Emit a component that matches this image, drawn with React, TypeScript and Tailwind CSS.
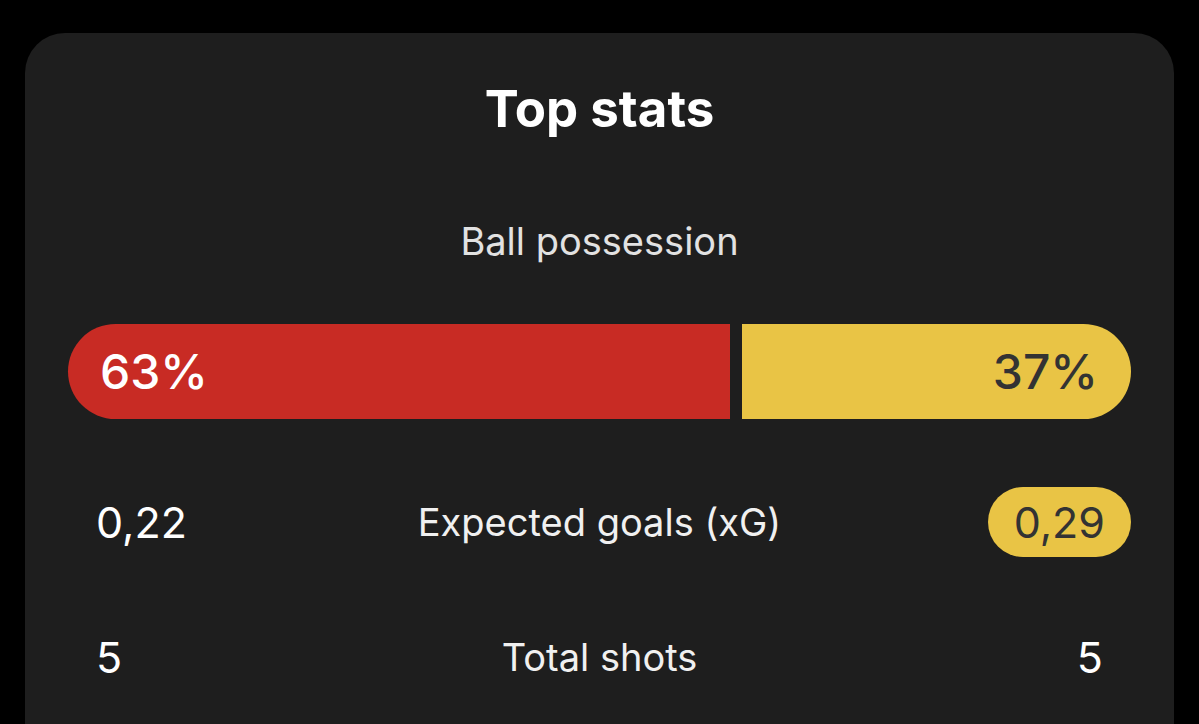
import React from "react";

interface Stat {
  label: string;
  home: string;
  away: string;
  winner: "home" | "away" | null;
}

const stats: Stat[] = [
  { label: "Expected goals (xG)", home: "0,22", away: "0,29", winner: "away" },
  { label: "Total shots", home: "5", away: "5", winner: null },
];

const possession = { home: 63, away: 37 };

const StatRow: React.FC<{ stat: Stat }> = ({ stat }) => {
  const pill = (value: string, highlighted: boolean) => (
    <span
      className={`h-[70px] flex items-center rounded-full text-[43px] leading-none ${
        highlighted ? "px-[26px] bg-[#e9c445] text-[#333333]" : "px-[28px] text-white"
      }`}
    >
      {value}
    </span>
  );

  return (
    <div className="flex items-center justify-between h-[70px]">
      <div className="w-[200px] flex justify-start">{pill(stat.home, stat.winner === "home")}</div>
      <span className="text-[38px] leading-none text-[#f0f0f0]">{stat.label}</span>
      <div className="w-[200px] flex justify-end">{pill(stat.away, stat.winner === "away")}</div>
    </div>
  );
};

export default function App() {
  return (
    <div
      className="h-[724px] overflow-hidden bg-black px-[25px] pt-[33px]"
      style={{ fontFamily: "Inter, 'Noto Sans', sans-serif" }}
    >
      <div className="h-[760px] rounded-[40px] bg-[#1e1e1e] px-[43px] pt-[50px]">
        <h2 className="text-center text-[51px] font-bold leading-none text-white">Top stats</h2>

        <p className="mt-[88px] text-center text-[38px] leading-none text-[#e2e2e2]">Ball possession</p>

        <div className="mt-[64px] flex h-[95px] gap-[12px]">
          <div
            className="flex items-center rounded-l-full bg-[#c82b24]"
            style={{ flexGrow: possession.home, flexBasis: 0 }}
          >
            <span className="pl-[32px] text-[48px] font-medium leading-none text-white">{possession.home}%</span>
          </div>
          <div
            className="flex items-center justify-end rounded-r-full bg-[#e9c445]"
            style={{ flexGrow: possession.away, flexBasis: 0 }}
          >
            <span className="pr-[33px] text-[48px] font-medium leading-none text-[#333333]">{possession.away}%</span>
          </div>
        </div>

        <div className="mt-[68px] flex flex-col gap-[65px]">
          {stats.map((s) => (
            <StatRow key={s.label} stat={s} />
          ))}
        </div>
      </div>
    </div>
  );
}
